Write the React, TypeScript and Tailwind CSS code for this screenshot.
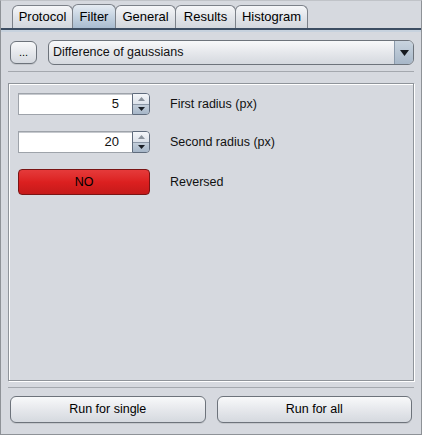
import React from "react";

const font = { fontFamily: '"Liberation Sans", Arial, sans-serif' };

function Tab({ label, active, w }: { label: string; active?: boolean; w: number }) {
  return (
    <div
      className={
        "flex items-center justify-center h-[23px] -mr-px rounded-t-[6px] border border-b-0 border-[#7c8189] text-[13px] text-black " +
        (active
          ? "bg-gradient-to-b from-[#e6ecf3] via-[#c5d3e1] to-[#a9bcd0] h-[24px]"
          : "bg-gradient-to-b from-[#f6f7f9] via-[#e2e5ea] to-[#d3d7dd]")
      }
      style={{ width: w }}
    >
      {label}
    </div>
  );
}

function Spinner({ value, className }: { value: string; className?: string }) {
  return (
    <div className={"flex h-[22px] " + (className ?? "")}>
      <div className="w-[114px] h-full bg-white border border-[#9ea3aa] border-r-0 flex items-center justify-end pr-[13px] text-[13px] shadow-[inset_0_1px_0_#c6c9ce]">
        {value}
      </div>
      <div className="w-[18px] h-full flex flex-col border border-[#5f6b7c] rounded-r-[4px] overflow-hidden">
        <div className="flex-1 flex items-center justify-center bg-gradient-to-b from-[#f4f6f9] to-[#dce2ea] border-b border-[#8d98a7]">
          <svg width="7" height="4" viewBox="0 0 7 4"><path d="M3.5 0L7 4H0Z" fill="#8a929c" /></svg>
        </div>
        <div className="flex-1 flex items-center justify-center bg-gradient-to-b from-[#c3ceda] to-[#a6b6c8]">
          <svg width="7" height="4" viewBox="0 0 7 4"><path d="M0 0H7L3.5 4Z" fill="#1a1f26" /></svg>
        </div>
      </div>
    </div>
  );
}

function Button({ label, className }: { label: string; className?: string }) {
  return (
    <div
      className={
        "flex items-center justify-center rounded-[6px] border border-[#6d737b] bg-gradient-to-b from-[#f8f9fa] via-[#e6e8ec] to-[#d5d9df] text-black shadow-[0_1px_0_#c3c6cb] " +
        (className ?? "")
      }
    >
      {label}
    </div>
  );
}

export default function App() {
  return (
    <div style={font} className="w-[422px] h-[435px] bg-[#d6d9df] border border-[#8e9297] border-t-[#c0c3c8] flex flex-col text-[12px] text-[#111]">
      {/* Tabs */}
      <div className="flex items-end pl-[11px] pt-[4px] h-[27px]">
        <Tab label="Protocol" w={61} />
        <Tab label="Filter" w={44} active />
        <Tab label="General" w={61} />
        <Tab label="Results" w={61} />
        <Tab label="Histogram" w={73} />
      </div>
      <div className="h-[2px] bg-[#3c4d62]" />
      <div className="h-[2px] bg-[#c7d2de]" />

      {/* Content */}
      <div className="flex-1 flex flex-col px-[7px]">
        <div className="flex items-center mt-[8px] h-[25px]">
          <Button label="..." className="w-[27px] h-[23px] ml-[2px] text-[11px]" />
          <div className="ml-[11px] flex-1 h-[25px] flex rounded-[6px] border border-[#6d737b] overflow-hidden bg-gradient-to-b from-[#f8f9fa] via-[#e6e8ec] to-[#d5d9df]">
            <div className="flex-1 flex items-center pl-[4px] text-[12.5px]">Difference of gaussians</div>
            <div className="w-[19px] border-l border-[#8b9aab] bg-gradient-to-b from-[#c9d4df] to-[#a7b7c8] flex items-center justify-center">
              <svg width="9" height="6" viewBox="0 0 9 6"><path d="M0 0H9L4.5 6Z" fill="#151a20" /></svg>
            </div>
          </div>
        </div>
        <div className="mt-[6px] h-px bg-[#a4a8ae]" />

        <div className="mt-[11px] h-[298px] border border-[#8f949a] shadow-[inset_1px_1px_0_#ffffff,1px_1px_0_#ffffff] flex flex-col pl-[9px] pt-[9px]">
          <div className="flex items-center">
            <Spinner value="5" />
            <span className="ml-[20px] text-[12.5px]">First radius (px)</span>
          </div>
          <div className="flex items-center mt-[16px]">
            <Spinner value="20" />
            <span className="ml-[20px] text-[12.5px]">Second radius (px)</span>
          </div>
          <div className="flex items-center mt-[16px]">
            <div className="w-[132px] h-[26px] rounded-[4px] border border-[#7a1414] bg-gradient-to-b from-[#e53a3a] via-[#dc2020] to-[#c51a1a] flex items-center justify-center text-[12.5px] text-black">
              NO
            </div>
            <span className="ml-[20px] text-[12.5px]">Reversed</span>
          </div>
        </div>

        <div className="mt-[6px] h-px bg-[#a4a8ae]" />
        <div className="flex gap-[11px] mt-[8px] px-[2px]">
          <Button label="Run for single" className="flex-1 h-[27px] text-[12.5px]" />
          <Button label="Run for all" className="flex-1 h-[27px] text-[12.5px]" />
        </div>
      </div>
    </div>
  );
}
